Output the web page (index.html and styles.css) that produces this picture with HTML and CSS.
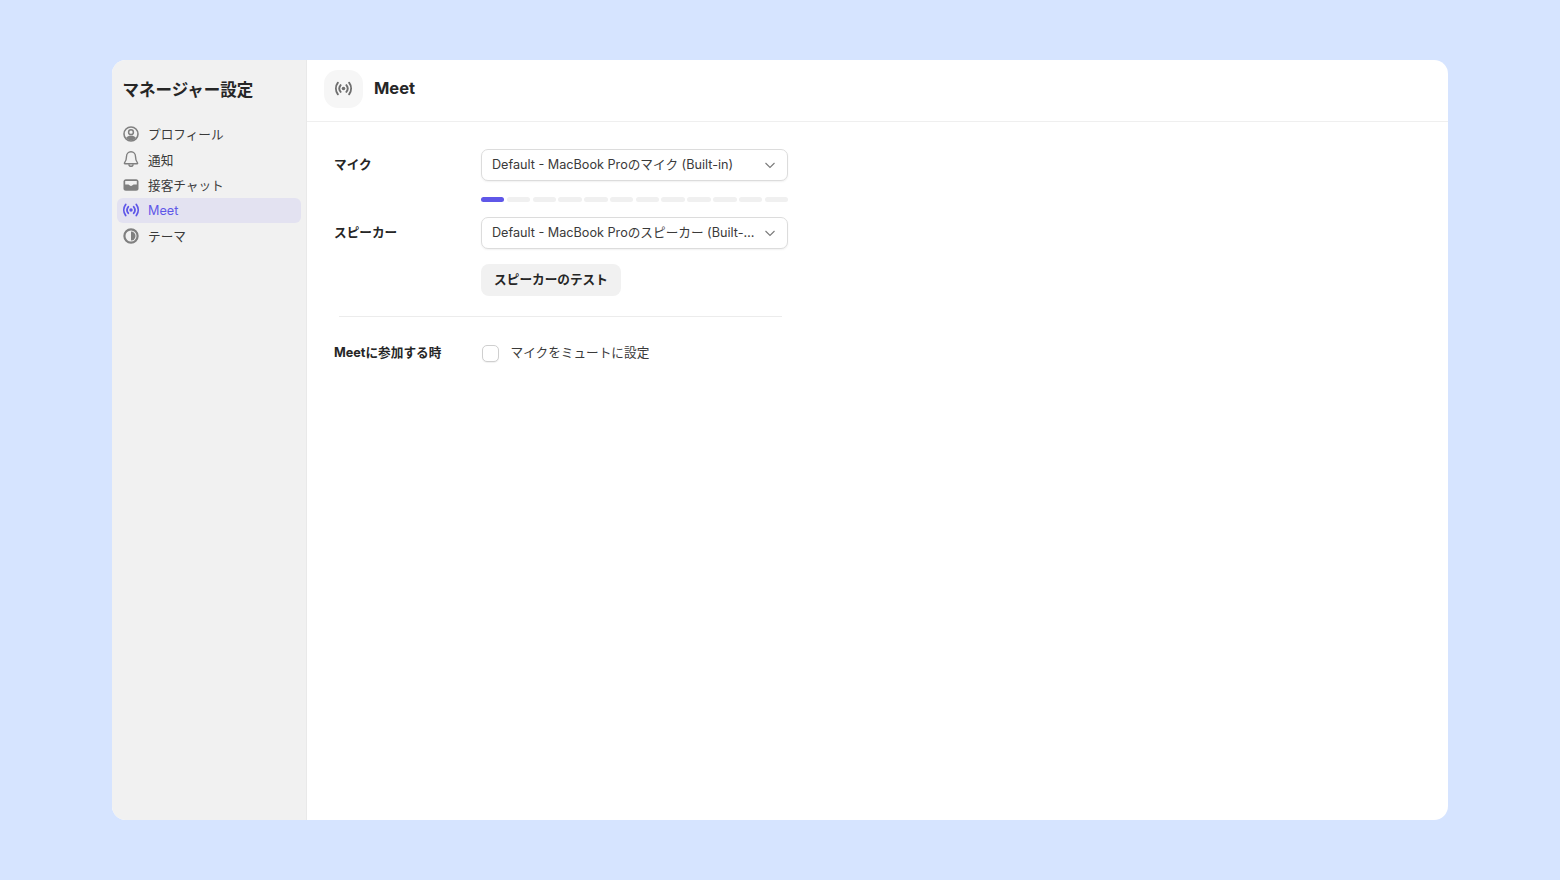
FILE: index.html
```html
<!DOCTYPE html>
<html lang="ja">
<head>
<meta charset="utf-8">
<title>マネージャー設定</title>
<link rel="stylesheet" href="styles.css">
</head>
<body>
<div class="window">
  <aside class="sidebar">
    <h1 class="side-title">マネージャー設定</h1>
    <nav class="nav">
      <a class="nav-item">
        <svg class="nav-icon" viewBox="0 0 18 18"><circle cx="9" cy="9" r="7" fill="none" stroke="currentColor" stroke-width="1.6"/><circle cx="9" cy="7.2" r="2.4" fill="none" stroke="currentColor" stroke-width="1.5"/><path d="M4 13.100C5 11.300 6.800 10.700 9 10.700s4 .6 5 2.400A6.800 6.800 0 0 1 9 15.600a6.800 6.800 0 0 1-5-2.500z" fill="currentColor"/></svg>
        <span>プロフィール</span>
      </a>
      <a class="nav-item">
        <svg class="nav-icon" viewBox="0 0 18 18"><path d="M9 1.800c-2.700 0-4.500 2-4.500 4.700 0 3.200-.7 4.800-2 6.400-.3.400 0 .9.400.9h12.200c.5 0 .7-.5.4-.9-1.300-1.600-2-3.200-2-6.400 0-2.700-1.800-4.700-4.500-4.700z" fill="none" stroke="currentColor" stroke-width="1.400" stroke-linejoin="round"/><path d="M6.900 14.200a2.100 2.100 0 0 0 4.200 0" fill="none" stroke="currentColor" stroke-width="1.400"/></svg>
        <span>通知</span>
      </a>
      <a class="nav-item">
        <svg class="nav-icon" viewBox="0 0 18 18"><path d="M3.800 3.200h10.400c1.300 0 2.300 1 2.300 2.300v7c0 1.300-1 2.300-2.300 2.300H3.800c-1.300 0-2.300-1-2.300-2.300v-7c0-1.300 1-2.300 2.300-2.300z" fill="currentColor"/><path d="M3.200 4.900h11.600v3.500h-3.100c-.5 0-.8.300-1 .7-.2.500-.7.800-1.700.8s-1.500-.3-1.700-.8c-.2-.4-.5-.7-1-.7H3.200z" fill="#f1f1f1"/></svg>
        <span>接客チャット</span>
      </a>
      <a class="nav-item active">
        <svg class="nav-icon" viewBox="0 0 18 18"><use href="#signal"/></svg>
        <span>Meet</span>
      </a>
      <a class="nav-item">
        <svg class="nav-icon" viewBox="0 0 18 18"><circle cx="9" cy="9" r="6.600" fill="none" stroke="currentColor" stroke-width="2.200"/><path d="M9 4.500a4.500 4.500 0 0 0 0 9z" fill="#f1f1f1"/><path d="M9 4.500a4.500 4.500 0 0 1 0 9z" fill="currentColor"/></svg>
        <span>テーマ</span>
      </a>
    </nav>
  </aside>
  <main class="main">
    <header class="header">
      <div class="header-icon">
        <svg class="header-svg" viewBox="0 0 18 18">
          <symbol id="signal" viewBox="0 0 18 18">
            <circle cx="9" cy="9" r="1.700" fill="currentColor"/>
            <path d="M6.300 5.800a5 5 0 0 0 0 6.400M11.700 5.800a5 5 0 0 1 0 6.400M3.700 3.500a9 9 0 0 0 0 11M14.300 3.500a9 9 0 0 1 0 11" fill="none" stroke="currentColor" stroke-width="1.800" stroke-linecap="round"/>
          </symbol>
          <use href="#signal"/>
        </svg>
      </div>
      <h2 class="header-title">Meet</h2>
    </header>
    <section class="content">
      <div class="row">
        <div class="row-label">マイク</div>
        <div class="row-body">
          <div class="select">
            <span class="select-text">Default - MacBook Proのマイク (Built-in)</span>
            <svg class="chevron" viewBox="0 0 12 12"><path d="M1.500 4l4.500 4.500L10.500 4" fill="none" stroke="currentColor" stroke-width="1.100"/></svg>
          </div>
          <div class="meter">
            <i class="seg on"></i><i class="seg"></i><i class="seg"></i><i class="seg"></i><i class="seg"></i><i class="seg"></i><i class="seg"></i><i class="seg"></i><i class="seg"></i><i class="seg"></i><i class="seg"></i><i class="seg"></i>
          </div>
        </div>
      </div>
      <div class="row row-speaker">
        <div class="row-label">スピーカー</div>
        <div class="row-body">
          <div class="select">
            <span class="select-text">Default - MacBook Proのスピーカー (Built-in)</span>
            <svg class="chevron" viewBox="0 0 12 12"><path d="M1.500 4l4.500 4.500L10.500 4" fill="none" stroke="currentColor" stroke-width="1.100"/></svg>
          </div>
          <button class="test-btn">スピーカーのテスト</button>
        </div>
      </div>
      <hr class="divider">
      <div class="row row-check">
        <div class="row-label">Meetに参加する時</div>
        <label class="check">
          <span class="checkbox"></span>
          <span class="check-text">マイクをミュートに設定</span>
        </label>
      </div>
    </section>
  </main>
</div>
</body>
</html>
```

FILE: styles.css
```css
* { box-sizing: border-box; }
html, body { height: 100%; }
body {
  margin: 0;
  background: #d6e4ff;
  padding: 60px 112px;
  font-family: Inter, "Noto Sans CJK JP", sans-serif;
  color: #262626;
}
.window {
  width: 1336px;
  height: 760px;
  display: flex;
  background: #fff;
  border-radius: 14px;
  overflow: hidden;
}
.sidebar {
  width: 195px;
  flex: none;
  background: #f1f1f1;
  border-right: 1px solid #e9e9e9;
  padding: 0 5px;
}
.side-title {
  margin: 0;
  padding: 20px 5.500px 0;
  height: 61px;
  font-size: 16.500px;
  line-height: 20px;
  font-weight: 700;
  color: #262626;
}
.nav { display: flex; flex-direction: column; gap: 0; }
.nav-item {
  height: 25.500px;
  display: flex;
  align-items: center;
  gap: 8px;
  padding: 0 5px;
  border-radius: 6px;
  font-size: 12.650px;
  color: #3a3a3a;
}
.nav-icon { width: 18px; height: 18px; flex: none; color: #808080; }
.nav-item.active { background: #e3e2f1; color: #5f57e8; }
.nav-item.active .nav-icon { color: #5f57e8; }
.main { flex: 1; min-width: 0; display: flex; flex-direction: column; }
.header {
  height: 62px;
  flex: none;
  display: flex;
  align-items: center;
  gap: 11px;
  padding: 0 0 0 17px;
  border-bottom: 1px solid #efefef;
}
.header-icon {
  width: 39px;
  height: 38px;
  margin-top: -4px;
  border-radius: 14px;
  background: #f6f6f6;
  display: flex;
  align-items: center;
  justify-content: center;
}
.header-svg { width: 19px; height: 19px; color: #6f6f6f; }
.header-title {
  margin: -6px 0 0;
  font-size: 16.500px;
  line-height: 22px;
  font-weight: 700;
  color: #262626;
}
.content { padding: 27px 27px 0; }
.row { display: flex; align-items: flex-start; }
.row-label {
  width: 147px;
  flex: none;
  font-size: 12.650px;
  font-weight: 700;
  line-height: 32px;
  color: #262626;
}
.row-body { width: 307px; flex: none; }
.row-speaker { margin-top: 15px; }
.select {
  height: 32px;
  display: flex;
  align-items: center;
  gap: 8px;
  padding: 0 11px 0 10px;
  background: #fff;
  border: 1px solid #dcdcdc;
  border-radius: 7px;
  box-shadow: 0 1px 2px rgba(0, 0, 0, .06);
}
.select-text {
  flex: 1;
  min-width: 0;
  padding-bottom: 1px;
  font-size: 12.650px;
  line-height: 20px;
  color: #3a3a3a;
  white-space: nowrap;
  overflow: hidden;
  text-overflow: ellipsis;
}
.chevron { width: 12px; height: 12px; flex: none; color: #7a7a7a; }
.meter { display: flex; gap: 2.300px; margin-top: 16px; height: 5px; }
.seg { flex: 1; background: #f0f0f0; border-radius: 3px; }
.seg.on { background: #5f57e8; }
.test-btn {
  display: block;
  margin-top: 15px;
  width: 140px;
  height: 32px;
  padding: 0 0 4px;
  border: 0;
  border-radius: 8px;
  background: #f1f1f1;
  font: 700 12.650px Inter, "Noto Sans CJK JP", sans-serif;
  color: #262626;
}
.divider {
  margin: 20px 0 0 5px;
  width: 443px;
  height: 1px;
  border: 0;
  background: #ececec;
}
.row-check { margin-top: 20px; }
.check {
  display: flex;
  align-items: center;
  gap: 12px;
  height: 32px;
  font-size: 12.650px;
  color: #3a3a3a;
}
.check-text { padding-bottom: 3px; }
.checkbox {
  width: 17px;
  height: 17px;
  flex: none;
  margin-left: .5px;
  border: 1.500px solid #cfcfcf;
  border-radius: 5px;
  background: #fff;
  box-shadow: 0 1px 1px rgba(0, 0, 0, .06);
}
```
